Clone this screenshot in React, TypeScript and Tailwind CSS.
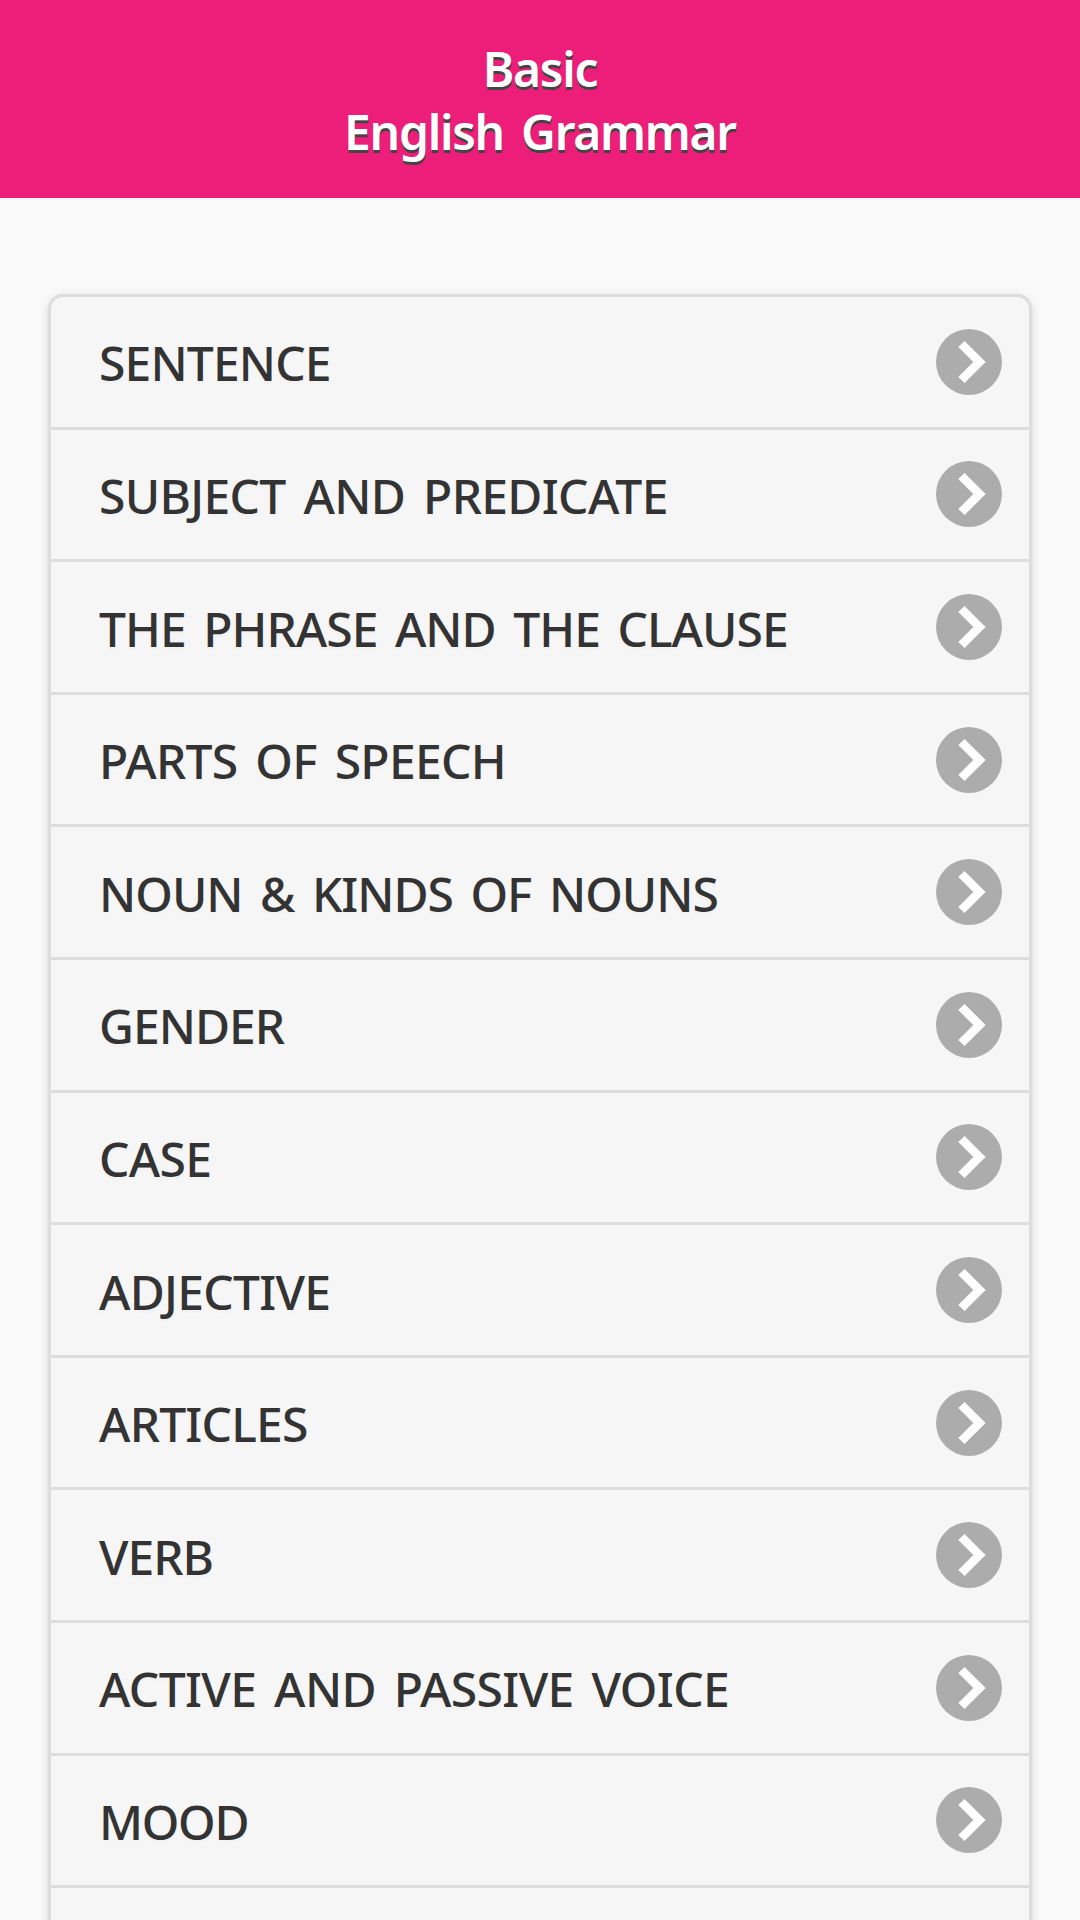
const topics = [
  { title: 'SENTENCE', tracking: 'tracking-[-0.85px]' },
  { title: 'SUBJECT AND PREDICATE', tracking: 'tracking-[-0.67px]' },
  { title: 'THE PHRASE AND THE CLAUSE', tracking: 'tracking-[-0.98px]' },
  { title: 'PARTS OF SPEECH', tracking: 'tracking-[-0.7px]' },
  { title: 'NOUN & KINDS OF NOUNS', tracking: 'tracking-[-1px]' },
  { title: 'GENDER', tracking: 'tracking-[-1px]' },
  { title: 'CASE', tracking: 'tracking-[-0.7px]' },
  { title: 'ADJECTIVE', tracking: 'tracking-[-0.75px]' },
  { title: 'ARTICLES', tracking: 'tracking-[-0.8px]' },
  { title: 'VERB', tracking: 'tracking-[-1px]' },
  { title: 'ACTIVE AND PASSIVE VOICE', tracking: 'tracking-[-0.65px]' },
  { title: 'MOOD', tracking: 'tracking-[-1.3px]' },
];

function ArrowBadge() {
  return (
    <svg className="h-[66px] w-[66px] shrink-0" viewBox="0 0 66 66">
      <circle cx="33" cy="33" r="33" fill="#acacac" />
      <path d="M25.4 15 L43.4 33 L25.4 51" fill="none" stroke="#fff" strokeWidth="8.8" />
    </svg>
  );
}

export default function App() {
  return (
    <div className="h-[1920px] w-[1080px] overflow-hidden bg-[#f9f9f9] font-['Noto_Sans',sans-serif]">
      <header className="h-[198px] bg-[#ed1e79] pt-[37px] text-center text-[48px] leading-[63px] font-semibold tracking-[-1.3px] text-white [text-shadow:0_3px_0_#444] [word-spacing:6px]">
        <h1>
          Basic
          <br />
          English Grammar
        </h1>
      </header>

      <ul className="mx-12 mt-24 h-[1700px] rounded-t-[15px] border-[3px] border-[#ddd] bg-[#f6f6f6] shadow-[0_3px_9px_rgba(0,0,0,0.15)]">
        {topics.map(({ title, tracking }) => (
          <li key={title} className="flex h-[132.6px] items-center justify-between border-b-[3px] border-[#ddd] pr-[27px] pl-12">
            <span className={`pt-[3.4px] text-[48px] font-medium text-[#333] [text-shadow:0_3px_0_#f3f3f3] [word-spacing:6px] ${tracking}`}>
              {title}
            </span>
            <ArrowBadge />
          </li>
        ))}
      </ul>
    </div>
  );
}
